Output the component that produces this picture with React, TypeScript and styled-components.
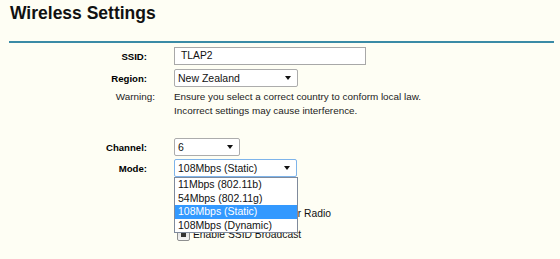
import React from 'react';
import styled, { createGlobalStyle } from 'styled-components';

const modes = ['11Mbps (802.11b)', '54Mbps (802.11g)', '108Mbps (Static)', '108Mbps (Dynamic)'];

export default function App() {
  return (
    <Page>
      <Global />
      <Title>Wireless Settings</Title>
      <Rule />
      <Form>
        <Row $top={4}>
          <Label>SSID:</Label>
          <TextInput>TLAP2</TextInput>
        </Row>
        <Row $top={4}>
          <Label>Region:</Label>
          <Select $w={124}>
            New Zealand
            <Caret />
          </Select>
        </Row>
        <Row $top={3}>
          <NoteLabel>Warning:</NoteLabel>
          <Note>
            Ensure you select a correct country to conform local law.
            <br />
            Incorrect settings may cause interference.
          </Note>
        </Row>
        <Row $top={20}>
          <Label>Channel:</Label>
          <Select $w={66}>
            6
            <Caret />
          </Select>
        </Row>
        <Row $top={3}>
          <Label>Mode:</Label>
          <Anchor>
            <Select $w={123} $focus>
              108Mbps (Static)
              <Caret />
            </Select>
            <List>
              {modes.map((m) => (
                <Option key={m} $active={m === '108Mbps (Static)'}>
                  {m}
                </Option>
              ))}
            </List>
          </Anchor>
        </Row>
        <CheckRow $top={26}>
          <span />
          <Check>
            <Box $on />
            Enable Wireless Router Radio
          </Check>
        </CheckRow>
        <CheckRow $top={1}>
          <span />
          <Check>
            <Box $on />
            Enable SSID Broadcast
          </Check>
        </CheckRow>
      </Form>
    </Page>
  );
}

function Caret() {
  return (
    <svg width="6" height="4" viewBox="0 0 6 4">
      <polygon points="0,0 6,0 3,4" fill="#111" />
    </svg>
  );
}

const Global = createGlobalStyle`
  html, body {
    margin: 0;
    background: #fefef4;
  }
  body {
    font-family: "Liberation Sans", Arial, sans-serif;
    color: #1e1e1e;
  }
`;

const Page = styled.div`
  width: 560px;
  height: 259px;
  overflow: hidden;
  background: #fefef4;
`;

const Title = styled.h1`
  margin: 0;
  padding: 3px 0 0 10px;
  font-size: 17.5px;
  line-height: 20px;
  font-weight: bold;
  color: #111;
`;

const Rule = styled.div`
  margin: 18px 0 0 9px;
  width: 545px;
  height: 2px;
  background: #3a8ba6;
`;

const Form = styled.div`
  display: flex;
  flex-direction: column;
`;

const Row = styled.div<{ $top: number }>`
  display: grid;
  grid-template-columns: 147px auto;
  column-gap: 27px;
  align-items: center;
  justify-content: start;
  margin-top: ${(p) => p.$top}px;
`;

const CheckRow = styled(Row)`
  height: 20px;
`;

const Label = styled.div`
  text-align: right;
  font-size: 9.6px;
  font-weight: bold;
  color: #000;
`;

const NoteLabel = styled.div`
  align-self: start;
  margin-right: -8px;
  text-align: right;
  font-size: 9.9px;
  line-height: 14px;
  color: #222;
`;

const Note = styled.div`
  font-size: 9.9px;
  line-height: 14px;
  color: #222;
`;

const TextInput = styled.div`
  width: 192px;
  height: 18px;
  box-sizing: border-box;
  border: 1px solid #a8a8a8;
  background: #fff;
  padding: 0 6px;
  font-size: 10.3px;
  line-height: 16px;
  color: #111;
`;

const Select = styled.div<{ $w: number; $focus?: boolean }>`
  width: ${(p) => p.$w}px;
  height: 18px;
  box-sizing: border-box;
  border: 1px solid ${(p) => (p.$focus ? '#7eb4ea' : '#acacac')};
  border-radius: 2px;
  background: #fff;
  display: flex;
  align-items: center;
  justify-content: space-between;
  padding: 0 6px 0 3px;
  font-size: 10.5px;
  color: #111;
`;

const Anchor = styled.div`
  position: relative;
`;

const List = styled.div`
  position: absolute;
  top: 100%;
  left: 0;
  z-index: 2;
  width: 124px;
  box-sizing: border-box;
  border: 1px solid #7f8a9c;
  background: #fff;
`;

const Option = styled.div<{ $active?: boolean }>`
  height: 13.5px;
  line-height: 13.5px;
  padding: 0 3px;
  font-size: 10.5px;
  white-space: nowrap;
  color: ${(p) => (p.$active ? '#fff' : '#111')};
  background: ${(p) => (p.$active ? '#3399ff' : '#fff')};
`;

const Check = styled.div`
  display: flex;
  align-items: center;
  gap: 3px;
  margin-left: 3px;
  font-size: 10.3px;
  color: #111;
`;

const Box = styled.span<{ $on?: boolean }>`
  width: 13px;
  height: 13px;
  box-sizing: border-box;
  border: 1px solid #8e8f8f;
  border-radius: 2px;
  background: linear-gradient(#dcdcdc, #f4f4f4);
  display: flex;
  align-items: center;
  justify-content: center;
  &::after {
    content: '';
    display: ${(p) => (p.$on ? 'block' : 'none')};
    width: 5px;
    height: 5px;
    background: #333;
  }
`;
